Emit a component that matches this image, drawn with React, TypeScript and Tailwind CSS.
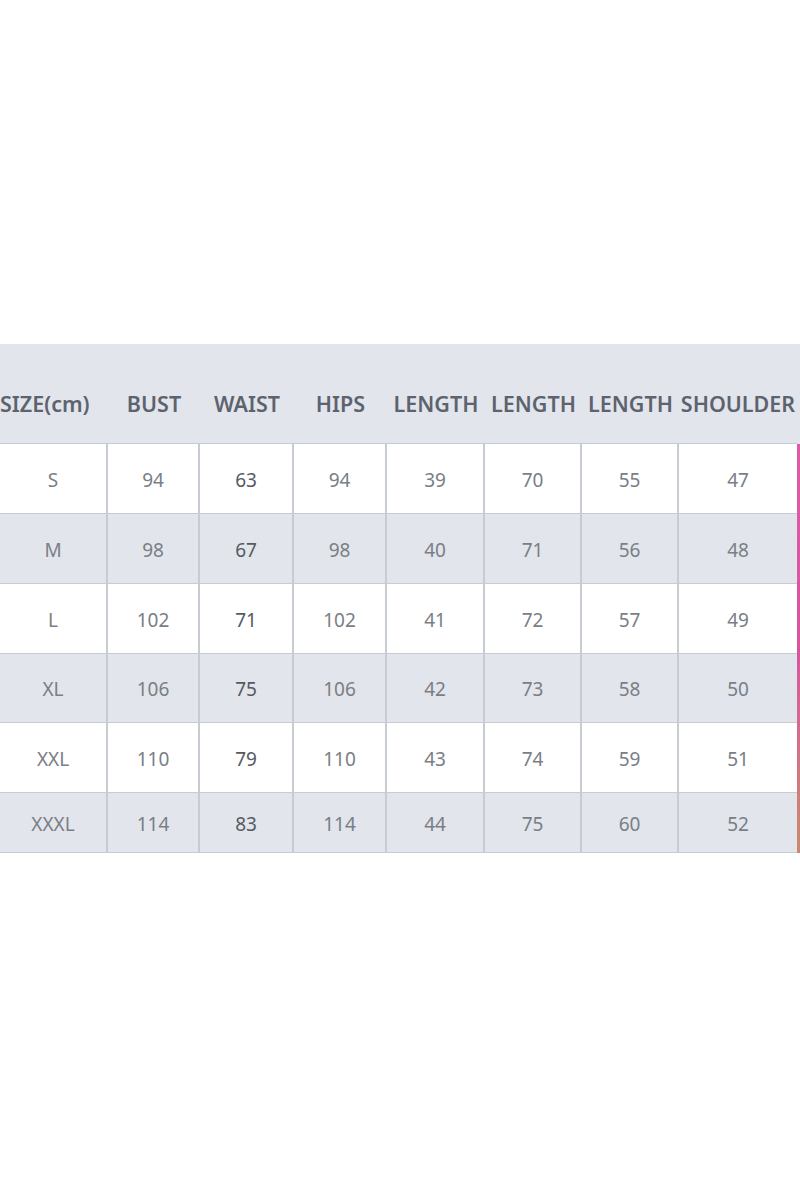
const cols = 'grid-cols-[108px_92px_94px_93px_98px_97px_97px_118px]'

const header = ['SIZE(cm)', 'BUST', 'WAIST', 'HIPS', 'LENGTH', 'LENGTH', 'LENGTH', 'SHOULDER']

const rows = [
  ['S', '94', '63', '94', '39', '70', '55', '47'],
  ['M', '98', '67', '98', '40', '71', '56', '48'],
  ['L', '102', '71', '102', '41', '72', '57', '49'],
  ['XL', '106', '75', '106', '42', '73', '58', '50'],
  ['XXL', '110', '79', '110', '43', '74', '59', '51'],
  ['XXXL', '114', '83', '114', '44', '75', '60', '52'],
]

const heights = ['h-[70px]', 'h-[70px]', 'h-[70px]', 'h-[69px]', 'h-[70px]', 'h-[60px]']

export default function App() {
  return (
    <div className="h-[1200px] w-[800px] overflow-hidden bg-white font-['Noto_Sans',sans-serif]">
      <div className="h-[344px]" />

      <div className="flex">
        <div className="w-[797px]">
          {/* Header */}
          <div className={`grid ${cols} h-[100px] border-b border-[#c6cbd4] bg-[#e2e5eb] pt-[22px]`}>
            {header.map((h, i) => (
              <div
                key={i}
                className={`flex items-center whitespace-nowrap text-[21.5px] font-semibold text-[#5d636e] ${i === 0 ? 'justify-start' : 'justify-center'}`}
              >
                {h}
              </div>
            ))}
          </div>

          {/* Body */}
          {rows.map((r, ri) => (
            <div
              key={ri}
              className={`grid ${cols} ${heights[ri]} border-b border-[#c6cbd4] ${ri % 2 === 1 ? 'bg-[#e2e5eb]' : 'bg-white'}`}
            >
              {r.map((c, ci) => (
                <div
                  key={ci}
                  className={`flex items-center justify-center pt-[3px] text-[19px] ${ci === 2 ? 'text-[#555a62]' : 'text-[#7a7e86]'} ${ci < 7 ? 'border-r-2 border-[#c6cbd4]' : ''}`}
                >
                  {c}
                </div>
              ))}
            </div>
          ))}
        </div>

        {/* edge strip */}
        <div className="flex w-[3px] flex-col">
          <div className="h-[100px] bg-[#e2e5eb]" />
          <div className="h-[409px] bg-gradient-to-b from-[#e05aa8] via-[#d9539f] to-[#c98a6a]" />
        </div>
      </div>
    </div>
  )
}
